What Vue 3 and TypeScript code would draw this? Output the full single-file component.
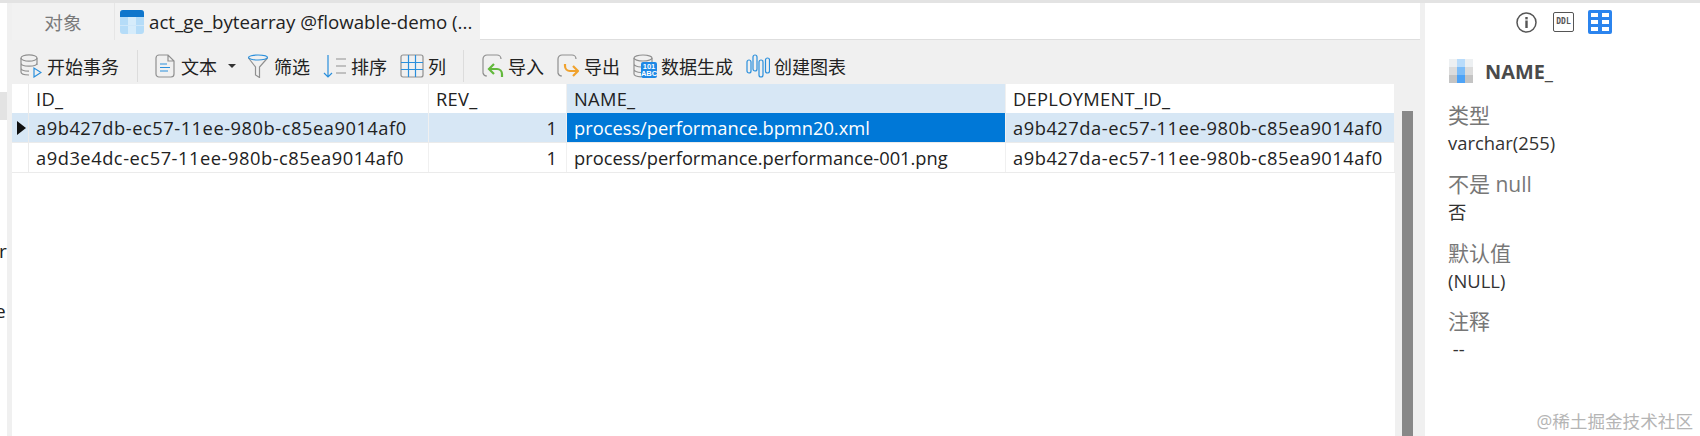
<script setup lang="ts">
const columns = [
  { name: 'ID_', width: 400, active: false },
  { name: 'REV_', width: 138, active: false },
  { name: 'NAME_', width: 439, active: true },
  { name: 'DEPLOYMENT_ID_', width: 389, active: false },
]

const rows = [
  { id: 'a9b427db-ec57-11ee-980b-c85ea9014af0', rev: 1, name: 'process/performance.bpmn20.xml', deployment: 'a9b427da-ec57-11ee-980b-c85ea9014af0', current: true },
  { id: 'a9d3e4dc-ec57-11ee-980b-c85ea9014af0', rev: 1, name: 'process/performance.performance-001.png', deployment: 'a9b427da-ec57-11ee-980b-c85ea9014af0', current: false },
]

const fields = [
  { label: '类型', value: 'varchar(255)' },
  { label: '不是 null', value: '否' },
  { label: '默认值', value: '(NULL)' },
  { label: '注释', value: ' --' },
]
</script>

<template>
  <div class="page">
    <div class="edge">
      <div class="edge-block"></div>
      <div class="edge-r">r</div>
      <div class="edge-e">e</div>
    </div>

    <div class="main">
      <div class="tabbar">
        <div class="tab">对象</div>
        <div class="tab tab-active">
          <svg class="tab-icon" width="24" height="24" viewBox="0 0 24 24">
            <rect x="0" y="0" width="24" height="24" rx="3" fill="#b5dcf8" />
            <path d="M0 3a3 3 0 0 1 3-3h18a3 3 0 0 1 3 3v4H0z" fill="#0f76cc" />
            <rect x="8" y="7" width="8" height="17" fill="#d6ecfb" />
            <rect x="0" y="15" width="24" height="1" fill="#cfe7f9" />
          </svg>
          <span>act_ge_bytearray @flowable-demo (...</span>
        </div>
        <div class="tab-rest"></div>
      </div>

      <div class="toolbar">
        <div class="tool">
          <svg width="22" height="24" viewBox="0 0 22 24" fill="none" stroke="#8f8f8f" stroke-width="1.2">
            <ellipse cx="9" cy="4" rx="8" ry="3.200" />
            <path d="M1 4v14c0 2 3.500 3 8 3M17 4v7M1 9c0 2 3.500 3.200 8 3.200s8-1.200 8-3.200M1 14c0 2 3.500 3.200 8 3.200" />
            <path d="M14 14v9l7-4.500z" stroke="#2a8fdc" />
          </svg>
          <span>开始事务</span>
        </div>
        <div class="sep"></div>
        <div class="tool tool-doc">
          <svg width="20" height="24" viewBox="0 0 20 24" fill="none">
            <path d="M4 1h9l6 6v13a3 3 0 0 1-3 3H4a3 3 0 0 1-3-3V4a3 3 0 0 1 3-3zM13 1v6h6" stroke="#8f8f8f" stroke-width="1.2" />
            <path d="M5 10h7M5 13.500h10M5 17h8" stroke="#2a8fdc" stroke-width="1.2" />
          </svg>
          <span>文本</span>
          <i class="caret"></i>
        </div>
        <div class="tool">
          <svg width="22" height="24" viewBox="0 0 22 24" fill="none" stroke="#8f8f8f" stroke-width="1.2">
            <path d="M1.500 4l7 9v8l4 2.500V13l8-9" />
            <ellipse cx="11" cy="3.500" rx="9.500" ry="2.500" stroke="#2a8fdc" />
          </svg>
          <span>筛选</span>
        </div>
        <div class="tool tool-tight">
          <svg width="24" height="24" viewBox="0 0 24 24" fill="none" stroke-width="1.2">
            <path d="M5 1v22M1 19l4 4 4-4" stroke="#2a8fdc" />
            <path d="M13 5h10M13 12h10M13 19h10" stroke="#8f8f8f" />
          </svg>
          <span>排序</span>
        </div>
        <div class="tool tool-tight tool-last">
          <svg width="24" height="24" viewBox="0 0 24 24" fill="none" stroke-width="1.2">
            <rect x="1" y="1" width="22" height="22" rx="2" stroke="#8f8f8f" />
            <path d="M8.500 1v22M15.500 1v22M1 8.500h22M1 15.500h22" stroke="#2a8fdc" />
          </svg>
          <span>列</span>
        </div>
        <div class="sep"></div>
        <div class="tool tool-tight">
          <svg width="22" height="24" viewBox="0 0 22 24" fill="none">
            <path d="M15 1H5a4 4 0 0 0-4 4v14a4 4 0 0 0 4 3M15 1a4 4 0 0 1 4 4" stroke="#8f8f8f" stroke-width="1.2" />
            <path d="M20 23v-3a5 5 0 0 0-5-5H8M12 10l-5 5 5 5" stroke="#62b83c" stroke-width="2.200" />
          </svg>
          <span>导入</span>
        </div>
        <div class="tool">
          <svg width="22" height="24" viewBox="0 0 22 24" fill="none">
            <path d="M15 1H5a4 4 0 0 0-4 4v14a4 4 0 0 0 4 3M15 1a4 4 0 0 1 4 4" stroke="#8f8f8f" stroke-width="1.2" />
            <path d="M8 10v2a5 5 0 0 0 5 5h7M16 12l5 5-5 5" stroke="#f0a22e" stroke-width="2.200" />
          </svg>
          <span>导出</span>
        </div>
        <div class="tool tool-tight">
          <svg width="24" height="24" viewBox="0 0 24 24" fill="none">
            <ellipse cx="10" cy="4" rx="9" ry="3" stroke="#8f8f8f" stroke-width="1.200" />
            <path d="M1 4v16c0 1.500 3 2.500 7 2.800M19 4v4M1 10c0 1.500 3 3 7 3M1 15.500c0 1.500 3 3 7 3" stroke="#8f8f8f" stroke-width="1.200" />
            <rect x="8" y="8" width="16" height="16" rx="2" fill="#1e88e5" />
            <text x="16" y="15" class="gen-text">101</text>
            <text x="16" y="22" class="gen-text">ABC</text>
          </svg>
          <span>数据生成</span>
        </div>
        <div class="tool tool-tight">
          <svg width="24" height="24" viewBox="0 0 24 24" fill="none" stroke="#2a8fdc" stroke-width="1.200">
            <rect x="1" y="6" width="4" height="13" rx="2" />
            <rect x="7" y="1" width="4" height="16" rx="2" />
            <rect x="13" y="6" width="4" height="17" rx="2" />
            <rect x="19.500" y="4" width="4" height="15" rx="2" />
          </svg>
          <span>创建图表</span>
        </div>
      </div>

      <div class="table-area">
        <div class="grid">
          <div class="grid-row grid-head">
            <div class="gutter"></div>
            <div
              v-for="col in columns"
              :key="col.name"
              class="cell"
              :class="{ 'cell-head-active': col.active }"
              :style="{ width: col.width + 'px' }"
            >{{ col.name }}</div>
          </div>
          <div v-for="row in rows" :key="row.id" class="grid-row" :class="{ current: row.current }">
            <div class="gutter"><i v-if="row.current" class="pointer"></i></div>
            <div class="cell cell-hex" :style="{ width: columns[0].width + 'px' }">{{ row.id }}</div>
            <div class="cell cell-num" :style="{ width: columns[1].width + 'px' }">{{ row.rev }}</div>
            <div class="cell" :class="{ selected: row.current }" :style="{ width: columns[2].width + 'px' }">{{ row.name }}</div>
            <div class="cell cell-hex" :style="{ width: columns[3].width + 'px' }">{{ row.deployment }}</div>
          </div>
        </div>
        <div class="scroll-track"><div class="scroll-thumb"></div></div>
      </div>
    </div>

    <aside class="panel">
      <div class="panel-tools">
        <svg width="21" height="21" viewBox="0 0 21 21" fill="none">
          <circle cx="10.500" cy="10.500" r="9.500" stroke="#555" stroke-width="1.500" />
          <rect x="9.300" y="8.500" width="2.400" height="7.500" fill="#555" />
          <rect x="9.300" y="5" width="2.400" height="2.400" fill="#555" />
        </svg>
        <div class="ddl">DDL</div>
        <svg width="24" height="24" viewBox="0 0 24 24">
          <rect width="24" height="24" rx="2" fill="#2b84ee" />
          <rect x="3" y="3" width="7" height="4" fill="#fff" />
          <rect x="3" y="10" width="7" height="4" fill="#fff" />
          <rect x="3" y="17" width="7" height="4" fill="#fff" />
          <rect x="14" y="3" width="7" height="4" fill="#fff" />
          <rect x="14" y="10" width="7" height="4" fill="#fff" />
          <rect x="14" y="17" width="7" height="4" fill="#fff" />
        </svg>
      </div>
      <div class="panel-title">
        <svg width="24" height="24" viewBox="0 0 24 24">
          <rect width="24" height="24" fill="#dcdcdc" />
          <rect width="24" height="8" fill="#edf0f2" />
          <rect y="16" width="24" height="8" fill="#c4c4c4" />
          <rect x="8" width="8" height="8" fill="#b9dcfb" />
          <rect x="8" y="8" width="8" height="8" fill="#7dbdf8" />
          <rect x="8" y="16" width="8" height="8" fill="#4da3f7" />
        </svg>
        <strong>NAME_</strong>
      </div>
      <div v-for="field in fields" :key="field.label" class="field">
        <div class="field-label">{{ field.label }}</div>
        <div class="field-value">{{ field.value }}</div>
      </div>
      <div class="watermark">@稀土掘金技术社区</div>
    </aside>
  </div>
</template>

<style scoped>
.page {
  display: flex;
  height: 433px;
  width: 1700px;
  border-top: 3px solid #e3e3e3;
  background: #f0f0f0;
  overflow: hidden;
  font-family: "Open Sans", "Noto Sans CJK SC", sans-serif;
  color: #222;
}

.edge {
  width: 7px;
  flex-shrink: 0;
  background: #fff;
  overflow: hidden;
  font-size: 19px;
  line-height: 24px;
}

.edge-block {
  height: 28px;
  margin-top: 89px;
  background: #e3e3e3;
}

.edge-r {
  margin-top: 119px;
  margin-left: -1px;
}

.edge-e {
  margin-top: 36px;
  margin-left: -5px;
}

.main {
  width: 1408px;
  margin-left: 5px;
  flex-shrink: 0;
  display: flex;
  flex-direction: column;
}

.tabbar {
  display: flex;
  height: 37px;
  font-size: 18.700px;
}

.tab {
  width: 103px;
  box-sizing: border-box;
  display: flex;
  align-items: center;
  justify-content: center;
  background: #f2f2f2;
  color: #7a7a7a;
  border-right: 1px solid #e6e6e6;
}

.tab-active {
  width: 365px;
  padding: 0 0 0 5px;
  justify-content: flex-start;
  gap: 5px;
  color: #222;
  border-right: none;
}

.tab-icon {
  flex-shrink: 0;
}

.tab-rest {
  flex: 1;
  background: #fff;
  border-bottom: 1px solid #dedede;
}

.toolbar {
  display: flex;
  align-items: center;
  height: 44px;
  box-sizing: border-box;
  font-size: 18px;
  padding: 8px 0 0 8px;
}

.tool {
  display: flex;
  align-items: center;
  gap: 5px;
  margin-right: 13px;
  white-space: nowrap;
}

.tool-tight {
  gap: 4px;
}

.tool-last {
  margin-right: 0;
}

.tool-doc {
  gap: 6px;
  margin-right: 11px;
}

.sep {
  width: 1px;
  height: 32px;
  background: #dcdcdc;
  margin: 0 18px 0 17px;
  flex-shrink: 0;
}

.tool + .sep:nth-child(2) {
  margin: 0 17px 0 5px;
}

.caret {
  width: 0;
  height: 0;
  margin-left: 5px;
  border-left: 4px solid transparent;
  border-right: 4px solid transparent;
  border-top: 4px solid #333;
}

.gen-text {
  fill: #fff;
  font-size: 7.500px;
  font-weight: 700;
  text-anchor: middle;
  font-family: "Liberation Sans", sans-serif;
}

.table-area {
  flex: 1;
  display: flex;
}

.grid {
  width: 1383px;
  flex-shrink: 0;
  background: #fff;
  font-size: 18.300px;
}

.grid-row {
  display: flex;
  height: 30px;
  box-sizing: border-box;
  border-bottom: 1px solid #ebebeb;
}

.grid-head {
  height: 29px;
  border-bottom: none;
  letter-spacing: 0.3px;
}

.gutter {
  width: 17px;
  flex-shrink: 0;
  box-sizing: border-box;
  border-right: 1px solid #ebebeb;
  display: flex;
  align-items: center;
  justify-content: center;
}

.cell {
  flex-shrink: 0;
  padding: 0 7px;
  line-height: 29px;
  border-right: 1px solid #f0f0f0;
  white-space: nowrap;
  overflow: hidden;
  box-sizing: border-box;
}

.cell-hex {
  letter-spacing: 0.53px;
}

.cell-head-active {
  background: #d7e7f5;
}

.cell-num {
  text-align: right;
  padding-right: 9px;
}

.current {
  background: #d7e7f5;
}

.selected {
  background: #0078d7;
  color: #fff;
}

.pointer {
  width: 0;
  height: 0;
  margin-left: 2px;
  border-top: 7px solid transparent;
  border-bottom: 7px solid transparent;
  border-left: 9px solid #111;
}

.scroll-track {
  width: 18px;
  box-sizing: border-box;
  padding: 27px 0 0 7px;
}

.scroll-thumb {
  height: 100%;
  background: #888;
}

.panel {
  flex: 1;
  margin-left: 5px;
  background: #fff;
  position: relative;
  padding: 0 0 0 23px;
  display: flex;
  flex-direction: column;
}

.panel-tools {
  display: flex;
  align-items: center;
  height: 24px;
  padding: 7px 0 0 68px;
  gap: 16px;
}

.ddl {
  width: 21px;
  height: 20px;
  box-sizing: border-box;
  margin-right: -2px;
  border: 1.500px solid #555;
  border-radius: 2px;
  color: #555;
  font: 700 8px/17px "DejaVu Sans Mono", monospace;
  text-align: center;
}

.panel-title {
  display: flex;
  align-items: center;
  gap: 12px;
  height: 24px;
  margin: 25px 0 18px 1px;
  font-size: 19.900px;
  color: #4a4a4a;
}

.field {
  margin-bottom: 12.800px;
}

.field-label {
  font-size: 21px;
  line-height: 28px;
  color: #777;
}

.field-value {
  font-size: 18.400px;
  line-height: 28px;
  color: #333;
  white-space: pre;
}

.watermark {
  position: absolute;
  right: 7px;
  bottom: 3px;
  font-size: 17.600px;
  color: #b5b5b5;
}
</style>

<style>
body {
  margin: 0;
  background: #fff;
}
</style>
